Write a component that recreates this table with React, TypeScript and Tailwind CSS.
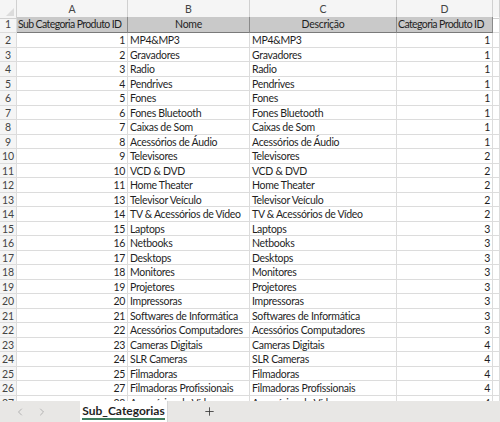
import { ChevronLeft, ChevronRight, Plus } from "lucide-react"

const rows: [number, string, number][] = [
    [1, "MP4&MP3", 1],
    [2, "Gravadores", 1],
    [3, "Radio", 1],
    [4, "Pendrives", 1],
    [5, "Fones", 1],
    [6, "Fones Bluetooth", 1],
    [7, "Caixas de Som", 1],
    [8, "Acessórios de Áudio", 1],
    [9, "Televisores", 2],
    [10, "VCD & DVD", 2],
    [11, "Home Theater", 2],
    [13, "Televisor Veículo", 2],
    [14, "TV & Acessórios de Vídeo", 2],
    [15, "Laptops", 3],
    [16, "Netbooks", 3],
    [17, "Desktops", 3],
    [18, "Monitores", 3],
    [19, "Projetores", 3],
    [20, "Impressoras", 3],
    [21, "Softwares de Informática", 3],
    [22, "Acessórios Computadores", 3],
    [23, "Cameras Digitais", 4],
    [24, "SLR Cameras", 4],
    [25, "Filmadoras", 4],
    [27, "Filmadoras Profissionais", 4],
    [28, "Acessórios de Vídeo", 4],
]

const cols = "grid grid-cols-[17px_111px_122px_147px_96px_1fr]"
const cell = "h-[14.5px] border-r border-b border-[#dcdcdc] px-[2px] leading-[14px] whitespace-nowrap overflow-hidden"

export default function App() {
    return <div className="w-[500px] h-[422px] flex flex-col bg-white text-[#1f1f1f] overflow-hidden" style={{ fontFamily: 'Lato, "Liberation Sans", sans-serif' }}>
        <div className="flex-1 overflow-hidden text-[10.5px] tracking-[-0.3px]">
            {/* column letters */}
            <div className={cols + " h-[17px] bg-[#f5f5f5] text-[#444] tracking-normal"}>
                <div className="border-r border-b border-[#d0d0d0] relative">
                    <div className="absolute right-[2px] bottom-[2px] w-0 h-0 border-l-[8px] border-l-transparent border-b-[8px] border-b-[#dcdcdc]" />
                </div>
                {["A", "B", "C", "D", ""].map((l, i) =>
                    <div key={i} className="border-r border-b border-[#d0d0d0] text-center leading-[18px]">{l}</div>
                )}
            </div>
            {/* header row */}
            <div className={cols}>
                <div className={cell + " text-center text-[#444] bg-[#f5f5f5] border-[#d0d0d0] h-[16px] leading-[15px] tracking-normal"}>1</div>
                <div className={cell + " bg-[#c9c9c9] border-b-[#7a7a7a] border-r-[#8a8a8a] h-[16px] leading-[15px] !px-[1px] tracking-[-0.6px]"}>Sub Categoria Produto ID</div>
                <div className={cell + " bg-[#c9c9c9] border-b-[#7a7a7a] border-r-[#8a8a8a] h-[16px] leading-[15px] text-center"}>Nome</div>
                <div className={cell + " bg-[#c9c9c9] border-b-[#7a7a7a] border-r-[#8a8a8a] h-[16px] leading-[15px] text-center"}>Descrição</div>
                <div className={cell + " bg-[#c9c9c9] border-b-[#7a7a7a] border-r-[#8a8a8a] h-[16px] leading-[15px] !px-[1px] tracking-[-0.6px]"}>Categoria Produto ID</div>
                <div className={cell + " h-[16px]"}></div>
            </div>
            {rows.map(([id, name, cat], i) =>
                <div key={i} className={cols}>
                    <div className={cell + " text-center text-[#444] bg-[#f5f5f5] border-[#d0d0d0] tracking-normal"}>{i + 2}</div>
                    <div className={cell + " text-right"}>{id}</div>
                    <div className={cell}>{name}</div>
                    <div className={cell}>{name}</div>
                    <div className={cell + " text-right"}>{cat}</div>
                    <div className={cell}></div>
                </div>
            )}
        </div>
        {/* sheet tabs */}
        <div className="h-[21px] shrink-0 bg-[#e8e7e5] flex items-stretch text-[12px]">
            <div className="w-[80px] flex items-center gap-[10px] pl-[14px] text-[#a0a0a0]">
                <ChevronLeft size={12} strokeWidth={1.5} />
                <ChevronRight size={12} strokeWidth={1.5} />
            </div>
            <div className="w-[88px] bg-white flex flex-col items-center justify-center border-r border-[#d6d6d6]">
                <span className="font-bold text-[#1f1f1f] leading-[14px] border-b-2 border-[#3f7d5f]">Sub_Categorias</span>
            </div>
            <div className="w-[82px] flex items-center justify-center text-[#333]">
                <Plus size={13} strokeWidth={1.5} />
            </div>
        </div>
    </div>
}
